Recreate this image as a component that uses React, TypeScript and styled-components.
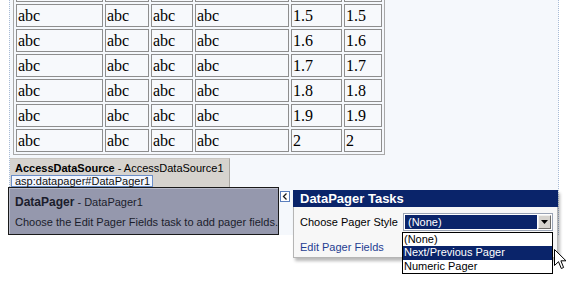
import React from "react";
import styled, { createGlobalStyle } from "styled-components";

const GlobalStyle = createGlobalStyle`
  html, body { margin: 0; padding: 0; background: #ffffff; overflow: hidden; }
  * { box-sizing: border-box; }
`;

const Page = styled.div`
  position: relative;
  width: 568px;
  height: 289px;
  overflow: hidden;
  background: #ffffff;
  font-family: "Liberation Sans", Arial, sans-serif;
`;

const Surface = styled.div`
  margin-left: 9px;
  width: 550px;
  border-left: 1px dotted #a9bcd6;
  border-right: 1px dotted #a9bcd6;
  background: #f5f8fc;
`;

const DataGrid = styled.div`
  display: grid;
  width: max-content;
  grid-template-columns: 87px 44px 42px 94px 51px 38px;
  grid-auto-rows: 23px;
  gap: 2px;
  padding: 2px;
  margin: -24px 0 0 3px;
  border: 1px solid #a8a8a8;
`;

const Cell = styled.div`
  border: 1px solid #8e8e8e;
  padding: 0 1px;
  font-family: "Liberation Serif", "Times New Roman", serif;
  font-size: 16px;
  line-height: 21px;
  color: #000;
  background: #f7f9fc;
  white-space: nowrap;
  overflow: hidden;
`;

const SourceTab = styled.div`
  position: relative;
  margin-top: 3px;
  width: 220px;
  height: 29px;
  background: #d6d3ce;
  border-top: 1px solid #c8c5c0;
  border-right: 1px solid #a9a6a1;
  padding: 2px 0 0 5px;
  font-size: 11px;
  line-height: 14px;
  color: #000;
  white-space: nowrap;
`;

const Bold = styled.b<{ $size?: number }>`
  font-weight: bold;
  font-size: ${(p) => (p.$size ? `${p.$size}px` : "inherit")};
`;

const TagLabel = styled.div`
  position: absolute;
  left: 1px;
  bottom: 0;
  width: 142px;
  height: 12px;
  background: #f3f7ff;
  border: 1px solid #6b8fc9;
  padding: 0 0 0 3px;
  font-size: 11px;
  line-height: 10px;
  color: #101010;
  white-space: nowrap;
`;

const PagerRow = styled.div`
  position: relative;
  display: flex;
  align-items: flex-start;
  height: 48px;
`;

const PagerBox = styled.div`
  margin-left: -2px;
  width: 271px;
  height: 48px;
  border: 1px solid #1a1a1a;
  box-shadow: inset 1px 1px 0 #b9bccb;
  background: #9598ad;
  padding: 4px 0 0 6px;
  font-size: 11px;
  line-height: 20px;
  color: #1b1d2c;
  white-space: nowrap;
`;

const ArrowButton = styled.div`
  margin: 4px 0 0 1px;
  width: 10px;
  height: 11px;
  border: 1px solid #5b7fbd;
  background: #ffffff;
  display: flex;
  align-items: center;
  justify-content: center;
`;

const TaskPanel = styled.div`
  position: absolute;
  left: 283px;
  top: 3px;
  width: 265px;
  height: 68px;
  background: #f7f7f7;
  border: 1px solid #b5b5b5;
  border-top: none;
  box-shadow: 2px 3px 3px rgba(0, 0, 0, 0.28);
`;

const TaskHeader = styled.div`
  height: 17px;
  margin: 0 -1px;
  background: #0a246a;
  color: #ffffff;
  font-weight: bold;
  font-size: 13px;
  line-height: 17px;
  padding-left: 7px;
`;

const TaskBody = styled.div`
  display: grid;
  grid-template-columns: 103px 150px;
  row-gap: 9px;
  padding: 6px 0 0 6px;
  font-size: 11px;
  color: #000;
  align-items: center;
`;

const TaskLabel = styled.div`
  line-height: 18px;
  white-space: nowrap;
`;

const TaskLink = styled.div`
  line-height: 14px;
  color: #1f3e92;
  white-space: nowrap;
`;

const SelectBox = styled.div`
  display: flex;
  width: 150px;
  height: 18px;
  border: 1px solid #9aa3b4;
  background: #ffffff;
  padding: 1px;
`;

const SelectValue = styled.div`
  flex: 1;
  background: #0a246a;
  color: #ffffff;
  font-size: 11px;
  line-height: 14px;
  padding-left: 3px;
`;

const SelectButton = styled.div`
  width: 13px;
  margin-left: 1px;
  background: #d6d3ce;
  border: 1px solid #f0efec;
  border-right-color: #6f6d6a;
  border-bottom-color: #6f6d6a;
  display: flex;
  align-items: center;
  justify-content: center;
`;

const DropList = styled.div`
  position: absolute;
  left: 108px;
  top: 42px;
  width: 151px;
  height: 42px;
  border: 1px solid #000000;
  background: #ffffff;
`;

const DropItem = styled.div<{ $active?: boolean }>`
  height: 13.3px;
  font-size: 11px;
  line-height: 13px;
  padding-left: 1px;
  white-space: nowrap;
  background: ${(p) => (p.$active ? "#0a246a" : "transparent")};
  color: ${(p) => (p.$active ? "#ffffff" : "#000000")};
`;

const Cursor = styled.svg`
  position: absolute;
  left: 554px;
  top: 249px;
`;

const rows: string[][] = [
  ["", "", "", "", "", ""],
  ["abc", "abc", "abc", "abc", "1.5", "1.5"],
  ["abc", "abc", "abc", "abc", "1.6", "1.6"],
  ["abc", "abc", "abc", "abc", "1.7", "1.7"],
  ["abc", "abc", "abc", "abc", "1.8", "1.8"],
  ["abc", "abc", "abc", "abc", "1.9", "1.9"],
  ["abc", "abc", "abc", "abc", "2", "2"],
];

export default function App() {
  return (
    <Page>
      <GlobalStyle />
      <Surface>
        <DataGrid>
          {rows.map((r, i) =>
            r.map((c, j) => <Cell key={`${i}-${j}`}>{c}</Cell>)
          )}
        </DataGrid>
        <SourceTab>
          <Bold>AccessDataSource</Bold> - AccessDataSource1
          <TagLabel>asp:datapager#DataPager1</TagLabel>
        </SourceTab>
        <PagerRow>
          <PagerBox>
            <div>
              <Bold $size={12}>DataPager</Bold> - DataPager1
            </div>
            <div>Choose the Edit Pager Fields task to add pager fields.</div>
          </PagerBox>
          <ArrowButton>
            <svg width="6" height="7" viewBox="0 0 6 7">
              <path d="M4.5 0.5 L1.5 3.5 L4.5 6.5" fill="none" stroke="#1a1a1a" strokeWidth="1.3" />
            </svg>
          </ArrowButton>
          <TaskPanel>
            <TaskHeader>DataPager Tasks</TaskHeader>
            <TaskBody>
              <TaskLabel>Choose Pager Style</TaskLabel>
              <SelectBox>
                <SelectValue>(None)</SelectValue>
                <SelectButton>
                  <svg width="7" height="4" viewBox="0 0 7 4">
                    <path d="M0 0 H7 L3.5 4 Z" fill="#000" />
                  </svg>
                </SelectButton>
              </SelectBox>
              <TaskLink>Edit Pager Fields</TaskLink>
            </TaskBody>
            <DropList>
              <DropItem>(None)</DropItem>
              <DropItem $active>Next/Previous Pager</DropItem>
              <DropItem>Numeric Pager</DropItem>
            </DropList>
          </TaskPanel>
        </PagerRow>
      </Surface>
      <Cursor width="13" height="21" viewBox="0 0 13 21">
        <path
          d="M0.5 0.5 L0.5 16.5 L4.5 12.7 L7.3 19.5 L9.6 18.5 L6.9 11.8 L12 11.8 Z"
          fill="#ffffff"
          stroke="#000000"
          strokeWidth="1"
          strokeLinejoin="miter"
        />
      </Cursor>
    </Page>
  );
}
